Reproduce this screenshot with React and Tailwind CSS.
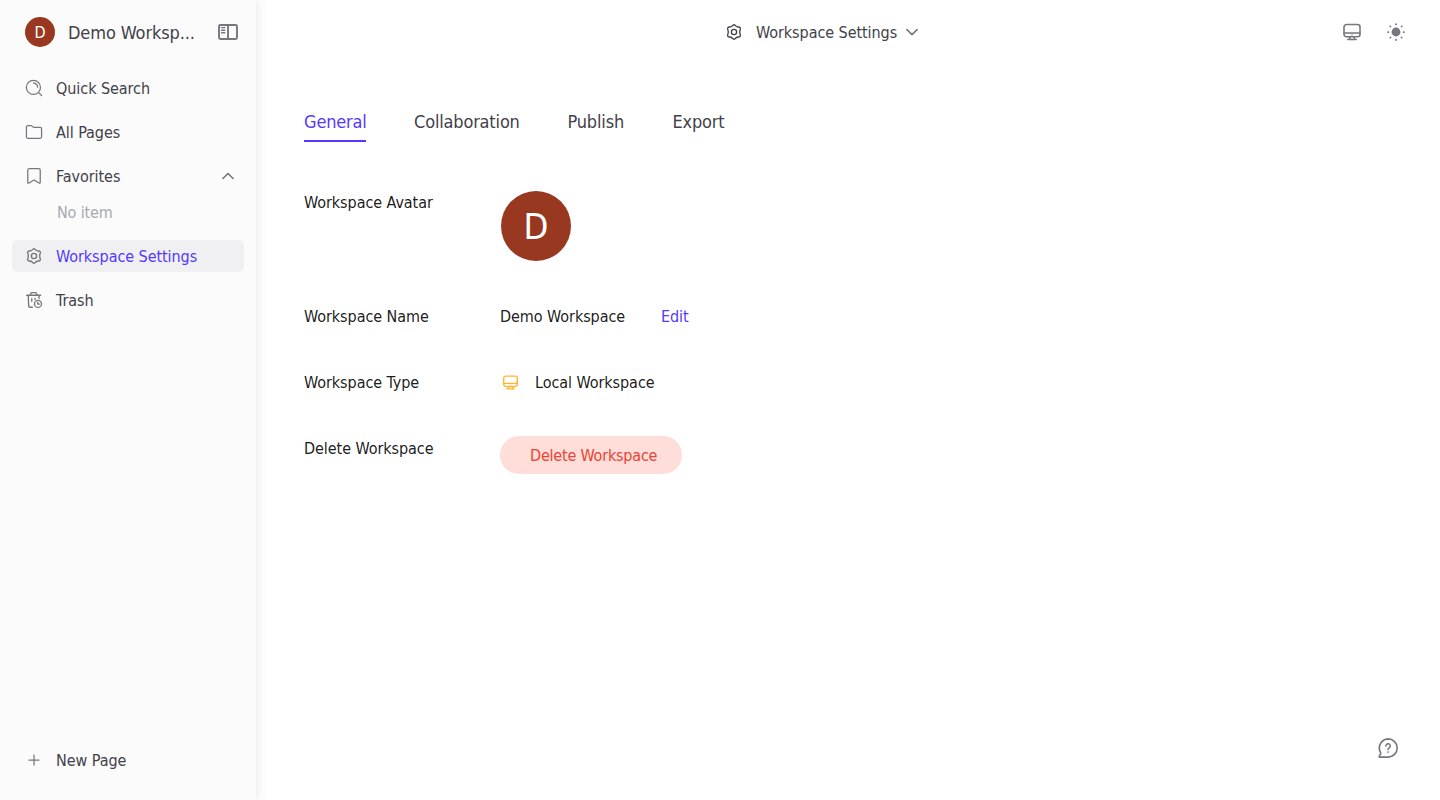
import React from "react";

const stroke = {
  viewBox: "0 0 24 24",
  fill: "none",
  stroke: "currentColor",
  strokeLinecap: "round",
  strokeLinejoin: "round",
};

function SettingsIcon() {
  return (
    <svg {...stroke} strokeWidth="1.8" className="mx-px size-[18px] shrink-0">
      <path d="M10.7 2.9q1.3-1.1 2.6 0c1.3 1.8 2.9 2.6 5 2.4 1.6 0 2.6 1.3 2.1 2.8-1.1 2.7-1.1 5.1 0 7.8.5 1.5-.5 2.8-2.1 2.8-2.1-.2-3.7.6-5 2.4q-1.3 1.1-2.6 0c-1.3-1.8-2.9-2.6-5-2.4-1.6 0-2.6-1.3-2.1-2.8 1.1-2.7 1.1-5.1 0-7.8-.5-1.5.5-2.8 2.1-2.8 2.1.2 3.7-.6 5-2.4z" />
      <circle cx="12" cy="12" r="3.5" />
    </svg>
  );
}

function SearchIcon() {
  return (
    <svg {...stroke} strokeWidth="1.7" className="mx-px size-[18px] shrink-0">
      <circle cx="11.2" cy="11.2" r="9.4" />
      <path d="M11.4 5.5a5.4 5.4 0 0 1 5.4 5.4M18.2 18.2l3.9 3.9" />
    </svg>
  );
}

function FolderIcon() {
  return (
    <svg {...stroke} strokeWidth="1.7" className="mx-px size-[18px] shrink-0">
      <path d="M1.9 5.6a2 2 0 0 1 2-2h4.2a2 2 0 0 1 1.4.6l1.1 1a2 2 0 0 0 1.4.6h8.1a2 2 0 0 1 2 2v10.6a2 2 0 0 1-2 2H3.9a2 2 0 0 1-2-2z" />
    </svg>
  );
}

function BookmarkIcon() {
  return (
    <svg {...stroke} strokeWidth="1.7" className="mx-px size-[18px] shrink-0">
      <path d="M3.7 4.2a2 2 0 0 1 2-2h12.6a2 2 0 0 1 2 2v16.4c0 .9-.9 1.3-1.6.8L12 17.4l-6.7 4c-.7.5-1.6.1-1.6-.8z" />
    </svg>
  );
}

function TrashIcon() {
  return (
    <svg {...stroke} strokeWidth="1.8" className="mx-px size-[18px] shrink-0">
      <path d="M2.2 5.6h18.6M6.9 5.4l1-2.5a1 1 0 0 1 .9-.7h5.4a1 1 0 0 1 .9.7l1 2.5M4.3 5.8l.6 14a2 2 0 0 0 2 1.9h2.9M18.9 5.8l-.2 4M9 10.2v3.4M13.4 10v1.4" />
      <circle cx="17.3" cy="17.2" r="4.7" />
      <path d="M17 15.1v2.3h2.2" />
    </svg>
  );
}

function SidebarIcon() {
  return (
    <svg {...stroke} strokeWidth="1.9" className="size-6 shrink-0">
      <rect x="3" y="5" width="18" height="14" rx="1.4" />
      <path d="M12 5v14" />
      <path d="M5.6 7.6h3.2M5.6 10.2h3.2M5.6 12.8h3.2" strokeWidth="1.4" />
    </svg>
  );
}

function MonitorIcon({ className }) {
  return (
    <svg {...stroke} strokeWidth="1.9" className={className}>
      <rect x="2.4" y="3" width="19.2" height="14.6" rx="3" />
      <path d="M2.6 13.2h18.8M9.4 17.8l-.5 3M14.6 17.8l.5 3M7 21h10" />
      <path d="M11.9 15.5h.2" strokeWidth="1.4" />
    </svg>
  );
}

function SunIcon() {
  return (
    <svg {...stroke} strokeWidth="2.1" className="size-5">
      <circle cx="12" cy="12" r="5.3" fill="currentColor" stroke="none" />
      <path d="M12 2.4v.5M12 21.1v.5M2.4 12h.5M21.1 12h.5M5.1 5.1l.3.3M18.6 18.6l.3.3M5.1 18.9l.3-.3M18.6 5.4l.3-.3" />
    </svg>
  );
}

function Chevron({ up }) {
  return (
    <svg {...stroke} strokeWidth="1.9" className="size-5 shrink-0">
      <path d={up ? "M5.9 15 12 9l6.1 6" : "M5.9 9.2 12 15.2l6.1-6"} />
    </svg>
  );
}

function PlusIcon() {
  return (
    <svg {...stroke} strokeWidth="1.5" className="size-5 shrink-0">
      <path d="M12 6v12M6 12h12" />
    </svg>
  );
}

function HelpIcon() {
  return (
    <svg {...stroke} strokeWidth="1.6" className="size-6">
      <path d="M12.1 2.9a9.1 9.1 0 1 1 0 18.2H3.6c-.4 0-.6-.4-.4-.7l1.4-2.6c.2-.4.2-.8 0-1.2A9.1 9.1 0 0 1 12.1 2.9z" />
      <path d="M9.9 9.9a2.2 2.2 0 1 1 3.3 1.9c-.8.5-1.2.8-1.2 1.6" strokeWidth="1.5" />
      <path d="M12 16v.1" strokeWidth="1.7" />
    </svg>
  );
}

function NavItem({ icon, label, active, children }) {
  return (
    <div
      className={
        active
          ? "flex h-8 items-center gap-3 rounded-md bg-[#f0f0f3] px-3 text-[#5438ff]"
          : "flex h-8 items-center gap-3 rounded-md px-3 text-[#424149]"
      }
    >
      <span className="text-[#77757d]">{icon}</span>
      <span className="grow pt-0.5 leading-6">{label}</span>
      {children}
    </div>
  );
}

function Row({ label, className, children }) {
  return (
    <div className={className}>
      <div className="w-[196px] leading-[26px]">{label}</div>
      {children}
    </div>
  );
}

export default function App() {
  return (
    <div className="flex h-screen w-full overflow-hidden bg-white font-['DejaVu_Sans_Condensed','DejaVu_Sans',sans-serif] text-base tracking-[-0.06px] [font-stretch:condensed] whitespace-nowrap text-[#424149]">
      <aside className="z-10 flex w-64 shrink-0 flex-col bg-[#fbfbfc] px-3 pb-6 shadow-[0_0_12px_rgba(66,65,73,0.14)]">
        <div className="flex h-16 items-center pr-1 pl-[13px]">
          <div className="flex size-[30px] items-center justify-center rounded-full bg-[#983821] pt-px text-white">D</div>
          <div className="ml-[13px] w-[128px] pt-0.5 text-lg tracking-[-0.1px]">Demo Worksp...</div>
          <div className="ml-auto text-[#77757d]"><SidebarIcon /></div>
        </div>
        <nav className="flex flex-col gap-3 pt-2">
          <NavItem icon={<SearchIcon />} label="Quick Search" />
          <NavItem icon={<FolderIcon />} label="All Pages" />
          <div>
            <NavItem icon={<BookmarkIcon />} label="Favorites">
              <span className="mr-[-6px] text-[#77757d]"><Chevron up /></span>
            </NavItem>
            <div className="mt-1 h-8 pl-[45px] leading-[34px] tracking-[-0.15px] text-[#a9a9ad]">No item</div>
          </div>
          <NavItem icon={<SettingsIcon />} label="Workspace Settings" active />
          <NavItem icon={<TrashIcon />} label="Trash" />
        </nav>
        <div className="mt-auto">
          <NavItem icon={<PlusIcon />} label="New Page" />
        </div>
      </aside>

      <main className="relative flex grow flex-col">
        <header className="grid h-16 grid-cols-[1fr_auto_1fr] items-center pr-[34px] pl-6">
          <div />
          <div className="mr-10 flex items-center">
            <SettingsIcon />
            <span className="ml-3 w-[141px] pt-0.5">Workspace Settings</span>
            <span className="ml-[5px] text-[#77757d]"><Chevron /></span>
          </div>
          <div className="flex items-center justify-end gap-6 text-[#77757d]">
            <MonitorIcon className="size-5" />
            <SunIcon />
          </div>
        </header>

        <div className="px-12 pt-9 text-black/90">
          <div className="flex gap-12 text-lg leading-[44px] tracking-[-0.17px] text-[#424149]">
            <div className="h-[42px] w-[62px] border-b-2 border-[#5438ff] text-[#5438ff]">General</div>
            <div className="h-[42px] w-[105.5px]">Collaboration</div>
            <div className="h-[42px] w-[57px]">Publish</div>
            <div className="h-[42px]">Export</div>
          </div>
          <Row label="Workspace Avatar" className="mt-12 flex">
            <div className="mt-px ml-px flex size-[70px] items-center justify-center rounded-full bg-[#983821] pt-0.5 text-[36px] text-white">D</div>
          </Row>
          <Row label="Workspace Name" className="mt-[43px] flex h-6 leading-[26px]">
            <div className="w-[161px]">Demo Workspace</div>
            <div className="text-[#5438ff]">Edit</div>
          </Row>
          <Row label="Workspace Type" className="mt-[42px] flex h-6 leading-[26px]">
            <span className="mt-[3.5px] mr-[16px] ml-[1.5px] text-[#ffb52f]"><MonitorIcon className="size-[17px]" /></span>
            <div className="ml-[0.5px]">Local Workspace</div>
          </Row>
          <Row label="Delete Workspace" className="mt-[42px] flex">
            <button className="h-[38px] w-[182px] rounded-full bg-[#ffddd8] pt-0.5 pl-[30px] text-left tracking-[-0.2px] text-[#eb4335]">Delete Workspace</button>
          </Row>
        </div>
        <div className="absolute right-10 bottom-10 text-[#77757d]"><HelpIcon /></div>
      </main>
    </div>
  );
}
